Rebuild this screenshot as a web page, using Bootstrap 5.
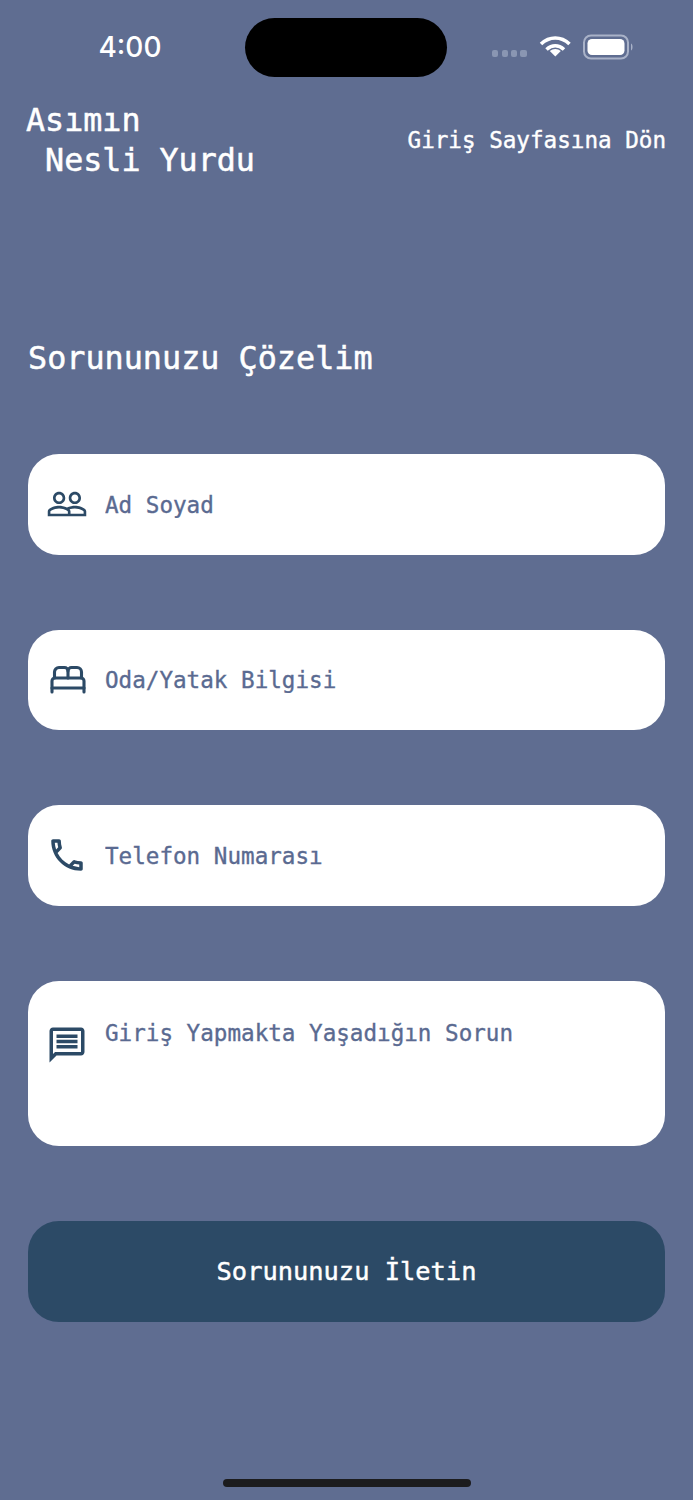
<!DOCTYPE html>
<html lang="tr">
<head>
  <meta charset="UTF-8">
  <title>Sorununuzu Çözelim</title>
  <meta name="viewport" content="width=device-width, initial-scale=1">
  <link href="https://cdn.jsdelivr.net/npm/bootstrap@5.3.2/dist/css/bootstrap.min.css" rel="stylesheet">
  <style>
    body {
      background-color: #5f6d91;
      font-family: "DejaVu Sans Mono", "Liberation Mono", monospace;
      color: #fff;
      height: 1500px;
      overflow: hidden;
    }
    .status-row {
      display: grid;
      grid-template-columns: 245px 202px 246px;
      padding-top: 18px;
      height: 77px;
    }
    .status-time {
      font-family: "Inter", sans-serif;
      font-size: 28px;
      font-weight: 500;
      text-align: center;
      width: 260px;
      line-height: 58px;
    }
    .island {
      background-color: #000;
      border-radius: 30px;
      height: 59px;
    }
    .status-icons {
      padding: 14px 0 0 45px;
      height: 59px;
    }
    .top-row {
      padding: 23px 27px 0 26px;
      height: 103px;
    }
    .app-title {
      font-size: 31.7px;
      line-height: 40px;
      white-space: pre;
      -webkit-text-stroke: .5px #fff;
    }
    .back-link {
      font-size: 22.6px;
      color: #fff;
      text-decoration: none;
      line-height: 40px;
      -webkit-text-stroke: .4px #fff;
    }
    .page-title {
      font-size: 31.8px;
      line-height: 40px;
      margin: 158px 0 76px 28px;
      -webkit-text-stroke: .5px #fff;
    }
    .form-area {
      padding: 0 28px;
    }
    .field-box {
      background-color: #fff;
      border-radius: 31px;
      height: 100.6px;
      padding-left: 18px;
      margin-bottom: 75px;
      gap: 17px;
    }
    .field-box.tall {
      height: 165px;
    }
    .field-box svg {
      width: 42px;
      height: 42px;
      flex-shrink: 0;
      fill: #2c4a66;
    }
    .field-box svg.bed-icon {
      fill: none;
      stroke: #2c4a66;
      stroke-width: 3.1;
      stroke-linecap: round;
      stroke-linejoin: round;
    }
    .field-box.tall svg {
      margin-top: 43px;
    }
    .field-box .form-control {
      border: 0;
      padding: 3px 0 0 0;
      background: transparent;
      box-shadow: none;
      font-family: inherit;
      font-size: 22.6px;
      border-radius: 0;
      resize: none;
      color: #5a6a91;
      -webkit-text-stroke: .35px #5a6a91;
    }
    .field-box textarea.form-control {
      margin-top: 33px;
      height: 110px;
      margin-right: 20px;
      line-height: 32px;
    }
    .field-box .form-control::placeholder {
      color: #5a6a91;
      opacity: 1;
    }
    .send-btn {
      background-color: #2c4a66;
      color: #fff;
      border: 0;
      border-radius: 31px;
      height: 101px;
      font-size: 25.4px;
      width: 100%;
      -webkit-text-stroke: .45px #fff;
    }
    .send-btn:hover {
      background-color: #2c4a66;
      color: #fff;
    }
    .home-bar {
      position: fixed;
      left: 223px;
      top: 1479px;
      width: 248px;
      height: 8px;
      border-radius: 4px;
      background-color: #1c1c1e;
    }
  </style>
</head>
<body>
<div class="status-row">
  <div class="status-time">4:00</div>
  <div class="island"></div>
  <div class="status-icons">
    <svg width="145" height="30" viewBox="0 0 145 30">
      <g fill="#8a96b2">
        <rect x="0" y="18" width="6" height="7" rx="2"/>
        <rect x="10" y="18" width="6" height="7" rx="2"/>
        <rect x="19" y="18" width="6" height="7" rx="2"/>
        <rect x="28" y="18" width="7" height="7" rx="2"/>
      </g>
      <g fill="none" stroke="#fff" stroke-width="3.6">
        <path d="M49 12c8.500-8 20-8 28.500 0"/>
        <path d="M54.500 17.500c5.500-5 12-5 17.500 0"/>
      </g>
      <path d="M63.300 24.500l-5.500-5.500c3.200-2.800 7.800-2.800 11 0z" fill="#fff"/>
      <rect x="92" y="3.500" width="44" height="23" rx="7" fill="none" stroke="#a9b2c8" stroke-width="2"/>
      <rect x="95.500" y="7" width="37" height="16" rx="4.500" fill="#fff"/>
      <path d="M139 11.500c2 .7 2 6.300 0 7z" fill="#a9b2c8"/>
    </svg>
  </div>
</div>

<div class="top-row d-flex justify-content-between align-items-center">
  <div class="app-title">Asımın
 Nesli Yurdu</div>
  <a href="#" class="back-link">Giriş Sayfasına Dön</a>
</div>

<h1 class="page-title">Sorununuzu Çözelim</h1>

<form class="form-area" onsubmit="return false">
  <div class="field-box d-flex align-items-center">
    <svg viewBox="0 0 24 24"><path d="M16.500 13c-1.200 0-3.070.34-4.500 1-1.430-.67-3.300-1-4.500-1C5.330 13 1 14.080 1 16.250V19h22v-2.750c0-2.170-4.330-3.250-6.500-3.250zm-4 4.500h-10v-1.250c0-.54 2.560-1.750 5-1.750s5 1.210 5 1.750v1.250zm9 0H14v-1.250c0-.46-.2-.86-.52-1.220.88-.3 1.960-.53 3.020-.53 2.440 0 5 1.210 5 1.750v1.250zM7.500 12c1.930 0 3.500-1.570 3.500-3.500S9.430 5 7.500 5 4 6.570 4 8.500 5.570 12 7.500 12zm0-5.500c1.100 0 2 .9 2 2s-.9 2-2 2-2-.9-2-2 .9-2 2-2zm9 5.500c1.930 0 3.500-1.570 3.500-3.500S18.430 5 16.500 5 13 6.570 13 8.500s1.570 3.500 3.500 3.500zm0-5.500c1.100 0 2 .9 2 2s-.9 2-2 2-2-.9-2-2 .9-2 2-2z"/></svg>
    <input type="text" class="form-control" placeholder="Ad Soyad">
  </div>
  <div class="field-box d-flex align-items-center">
    <svg class="bed-icon" viewBox="0 0 42 42">
      <path d="M8.500 19V13a4.500 4.500 0 0 1 4.500-4.500h5.500a3.500 3.500 0 0 1 3.500 3.500V19"/>
      <path d="M22 12a3.500 3.500 0 0 1 3.500-3.500H31a4.500 4.500 0 0 1 4.500 4.500V19"/>
      <path d="M6 33V22a3 3 0 0 1 3-3h26a3 3 0 0 1 3 3V33"/>
      <path d="M6 29h32"/>
    </svg>
    <input type="text" class="form-control" placeholder="Oda/Yatak Bilgisi">
  </div>
  <div class="field-box d-flex align-items-center">
    <svg viewBox="0 0 24 24"><path d="M6.540 5c.06.89.21 1.760.45 2.590l-1.200 1.200c-.41-1.200-.67-2.470-.76-3.790h1.510m9.860 12.020c.85.24 1.720.39 2.600.45v1.490c-1.320-.09-2.590-.35-3.800-.75l1.200-1.190M7.500 3H4c-.55 0-1 .45-1 1 0 9.390 7.610 17 17 17 .55 0 1-.45 1-1v-3.490c0-.55-.45-1-1-1-1.240 0-2.450-.2-3.570-.57-.1-.04-.21-.05-.31-.05-.26 0-.51.1-.71.29l-2.200 2.200c-2.830-1.450-5.150-3.760-6.590-6.590l2.200-2.200c.28-.28.36-.67.25-1.020C8.700 6.450 8.500 5.250 8.500 4c0-.55-.45-1-1-1z"/></svg>
    <input type="tel" class="form-control" placeholder="Telefon Numarası">
  </div>
  <div class="field-box tall d-flex align-items-start">
    <svg viewBox="0 0 24 24"><path d="M20 2H4c-1.100 0-2 .9-2 2v18l4-4h14c1.100 0 2-.9 2-2V4c0-1.100-.9-2-2-2zm0 14H5.170L4 17.170V4h16v12z"/><path d="M6 12h12v2H6zm0-3h12v2H6zm0-3h12v2H6z"/></svg>
    <textarea class="form-control" placeholder="Giriş Yapmakta Yaşadığın Sorun"></textarea>
  </div>
  <button type="submit" class="btn send-btn">Sorununuzu İletin</button>
</form>

<div class="home-bar"></div>

<script src="https://cdn.jsdelivr.net/npm/bootstrap@5.3.2/dist/js/bootstrap.bundle.min.js"></script>
</body>
</html>
